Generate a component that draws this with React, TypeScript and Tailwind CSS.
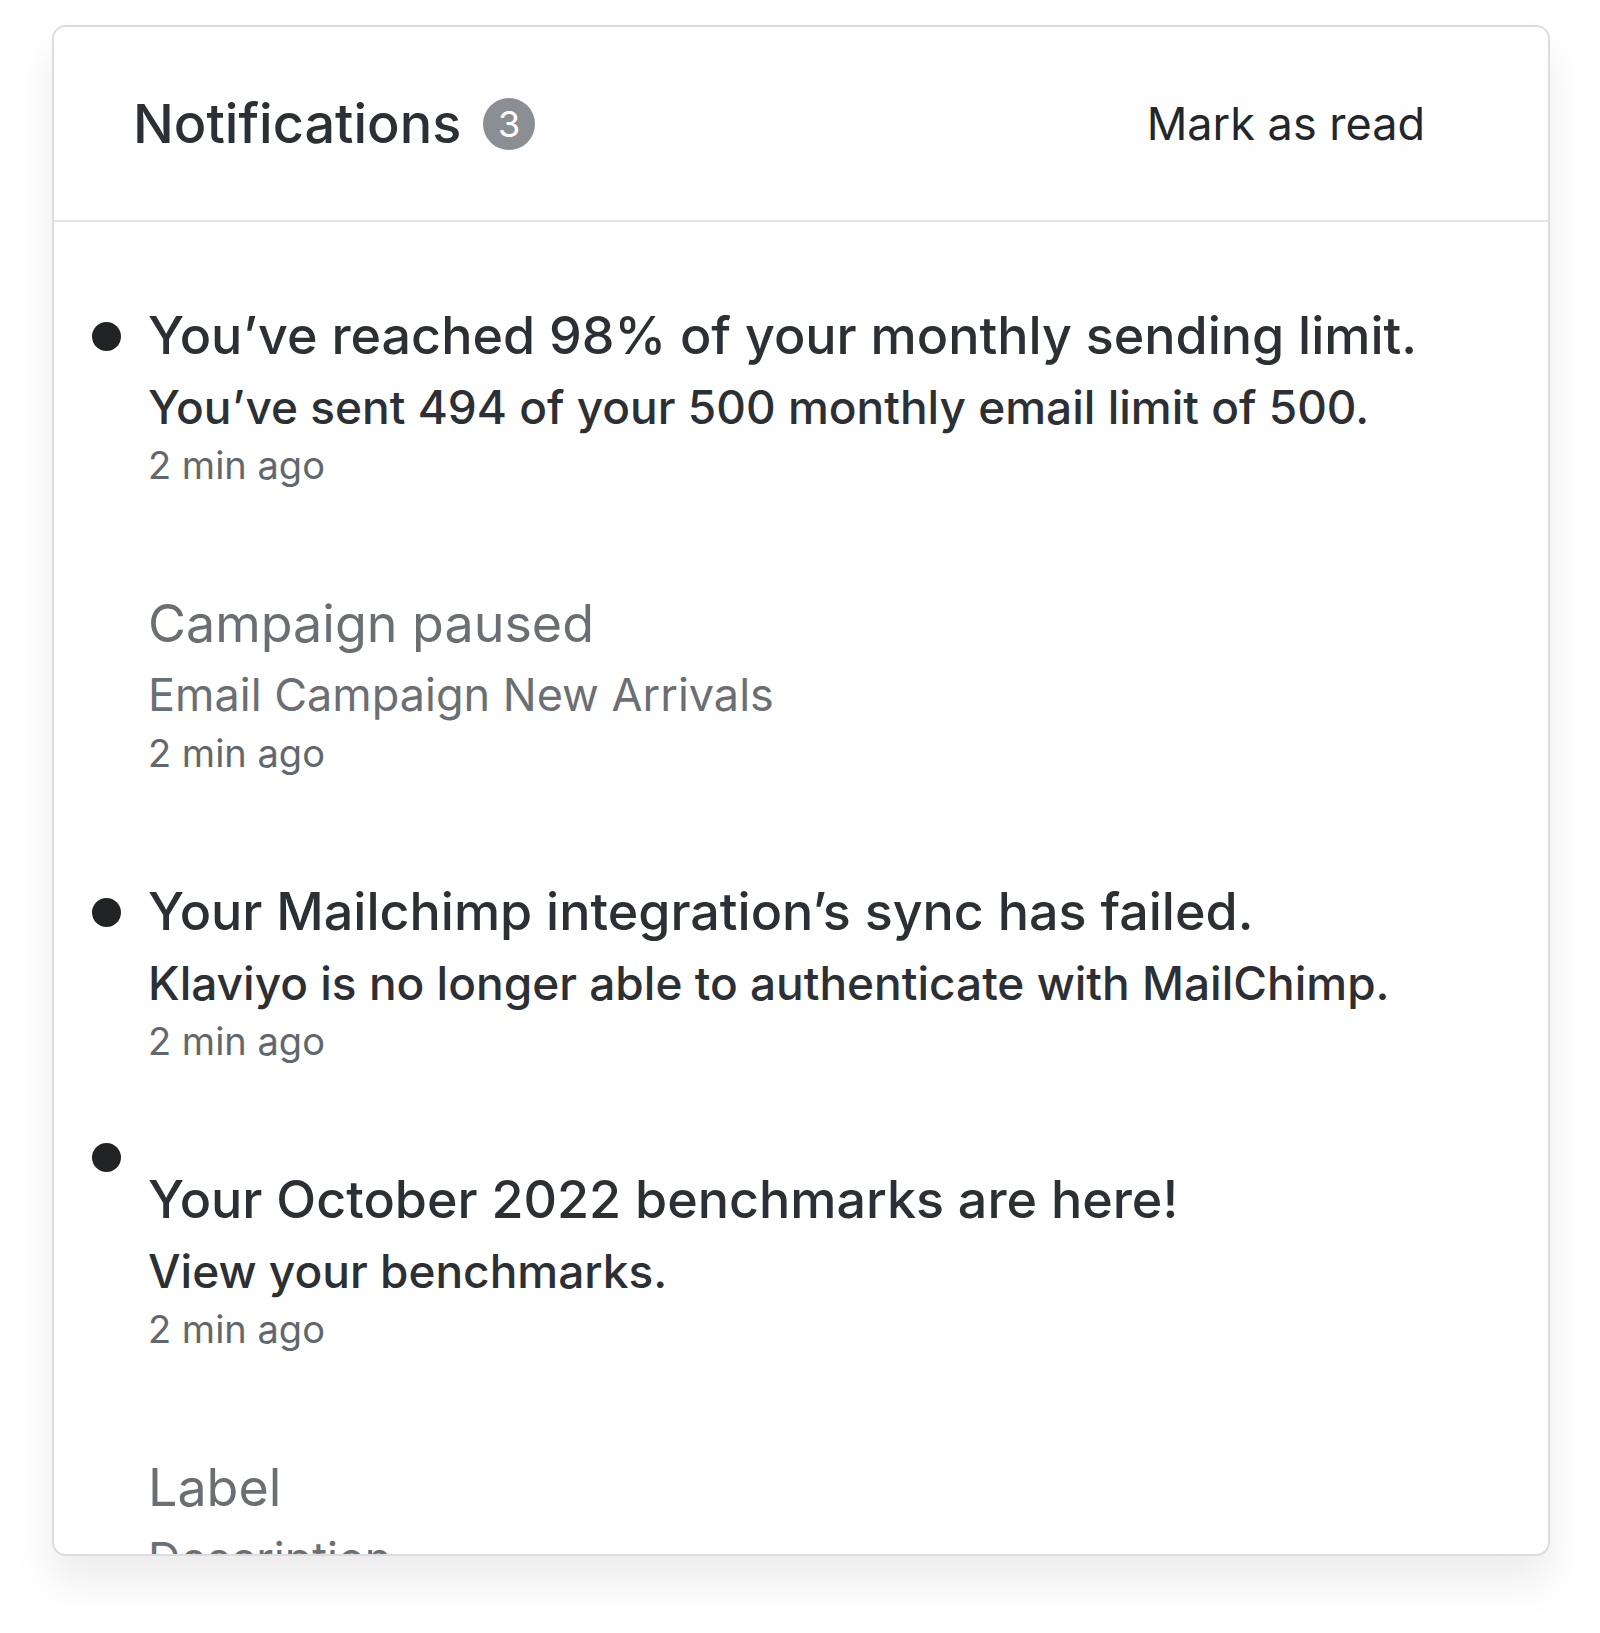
import React from "react";

type Note = {
  title: string;
  body: string;
  time?: string;
  unread: boolean;
  dotTop?: string;
};

const NOTES: Note[] = [
  {
    title: "You\u2019ve reached 98% of your monthly sending limit.",
    body: "You\u2019ve sent 494 of your 500 monthly email limit of 500.",
    time: "2 min ago",
    unread: true,
  },
  {
    title: "Campaign paused",
    body: "Email Campaign New Arrivals",
    time: "2 min ago",
    unread: false,
  },
  {
    title: "Your Mailchimp integration\u2019s sync has failed.",
    body: "Klaviyo is no longer able to authenticate with MailChimp.",
    time: "2 min ago",
    unread: true,
  },
  {
    title: "Your October 2022 benchmarks are here!",
    body: "View your benchmarks.",
    time: "2 min ago",
    unread: true,
    dotTop: "-mt-[21px]",
  },
  {
    title: "Label",
    body: "Description",
    unread: false,
  },
];

function Row({ n }: { n: Note }) {
  return (
    <div className="flex items-start">
      <div className="w-[94px] shrink-0 pl-[38px]">
        {n.unread && (
          <div className={`h-[29px] w-[29px] rounded-full bg-[#222324] ${n.dotTop ?? "mt-[22px]"}`} />
        )}
      </div>
      <div className="min-w-0">
        <div
          className={`whitespace-nowrap text-[52px] leading-[72px] ${
            n.unread ? "font-medium text-[#2c3034]" : "text-[#6b6f73]"
          }`}
        >
          {n.title}
        </div>
        <div
          className={`whitespace-nowrap leading-[70px] ${
            n.unread ? "text-[46px] font-medium text-[#2c3034]" : "text-[45px] text-[#6b6f73]"
          }`}
        >
          {n.body}
        </div>
        {n.time && <div className="text-[38px] leading-[46px] text-[#63676b]">{n.time}</div>}
      </div>
    </div>
  );
}

export default function App() {
  return (
    <div className="min-h-[1633px] bg-white pt-[25px] pl-[52px]" style={{ fontFamily: "Inter, 'Noto Sans', sans-serif" }}>
      <div className="flex h-[1531px] w-[1498px] flex-col overflow-hidden rounded-[14px] border-2 border-[#dcdddf] bg-white shadow-[0_26px_44px_rgba(0,0,0,0.08)]">
        <div className="flex h-[195px] shrink-0 items-center justify-between border-b-2 border-[#e4e5e7] bg-[#fefefe] pl-[79px] pr-[123px]">
          <div className="flex items-center gap-[22px]">
            <span className="text-[54px] font-medium text-[#2c3034]">Notifications</span>
            <span className="flex h-[52px] w-[52px] items-center justify-center rounded-full bg-[#8b8e93] text-[36px] text-white">3</span>
          </div>
          <button className="text-[45px] text-[#24272a]">Mark as read</button>
        </div>
        <div className="flex flex-col gap-[100px] pt-[78px]">
          {NOTES.map((n) => (
            <Row key={n.title} n={n} />
          ))}
        </div>
      </div>
    </div>
  );
}
